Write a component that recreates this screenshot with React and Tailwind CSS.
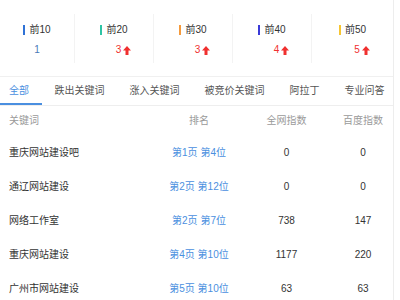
import React, { useState } from "react";

const stats = [
  { label: "前10", value: 1, bar: "bg-[#2f72d6]", up: false },
  { label: "前20", value: 3, bar: "bg-[#2ec4a5]", up: true },
  { label: "前30", value: 3, bar: "bg-[#f59a3c]", up: true },
  { label: "前40", value: 4, bar: "bg-[#3a3ad8]", up: true },
  { label: "前50", value: 5, bar: "bg-[#f7c531]", up: true },
];

const tabs = ["全部", "跌出关键词", "涨入关键词", "被竞价关键词", "阿拉丁", "专业问答"];

const rows = [
  { keyword: "重庆网站建设吧", page: 1, pos: 4, all: 0, baidu: 0 },
  { keyword: "通辽网站建设", page: 2, pos: 12, all: 0, baidu: 0 },
  { keyword: "网络工作室", page: 2, pos: 7, all: 738, baidu: 147 },
  { keyword: "重庆网站建设", page: 4, pos: 10, all: 1177, baidu: 220 },
  { keyword: "广州市网站建设", page: 5, pos: 10, all: 63, baidu: 63 },
];

const UpArrow = () => (
  <svg width="8" height="9" viewBox="0 0 8 9" className="ml-[2px]">
    <path d="M4 0 L8 4.5 L5.5 4.5 L5.5 9 L2.5 9 L2.5 4.5 L0 4.5 Z" fill="#f0302f" />
  </svg>
);

const App = () => {
  const [activeTab, setActiveTab] = useState(0);

  return (
    <div className="w-[400px] h-[300px] overflow-hidden bg-white font-['Liberation_Sans','Noto_Sans_CJK_SC',sans-serif] text-[10px]">
      <div className="w-[394px] h-full border-r border-[#ededed]">
        <div className="h-[77px] border-b border-[#f0f0f0] pt-[14px]">
          <div className="grid grid-cols-[75px_79px_79px_79px_81px] h-[49px]">
            {stats.map((s, i) => (
              <div
                key={s.label}
                className={`flex flex-col items-center pt-[9px] ${
                  i < 4 ? "border-r border-[#f3f3f3]" : ""
                }`}
              >
                <div className="flex items-center leading-[14px] text-[#333]">
                  <span className={`w-[2px] h-[10px] mr-[4px] ${s.bar}`} />
                  {s.label}
                </div>
                {s.up ? (
                  <div className="flex items-center mt-[6px] leading-[14px] pl-[19px] text-[#f0302f]">
                    {s.value}
                    <UpArrow />
                  </div>
                ) : (
                  <div className="mt-[6px] leading-[14px] text-[#4a78b8]">{s.value}</div>
                )}
              </div>
            ))}
          </div>
        </div>

        <div className="flex h-[29px] border-b border-[#eeeeee]">
          {tabs.map((t, i) => (
            <button
              key={t}
              onClick={() => setActiveTab(i)}
              className={`flex shrink-0 items-center whitespace-nowrap border-b-2 ${
                i === 0 ? "pl-[9px] pr-[13px]" : "px-[12.5px]"
              } ${
                activeTab === i
                  ? "border-[#4a8fe0] text-[#4a8fe0]"
                  : "border-transparent text-[#555]"
              }`}
            >
              {t}
            </button>
          ))}
        </div>

        <div className="grid grid-cols-[158px_82px_93px_60px] h-[29px] items-center text-[#9a9a9a]">
          <div className="pl-[9px]">关键词</div>
          <div className="text-center">排名</div>
          <div className="text-center">全网指数</div>
          <div className="text-center">百度指数</div>
        </div>

        {rows.map((r) => (
          <div
            key={r.keyword}
            className="grid grid-cols-[158px_82px_93px_60px] h-[34px] items-center text-[#333]"
          >
            <div className="pl-[9px]">{r.keyword}</div>
            <div className="text-center text-[#4a8fe0]">
              第{r.page}页 第{r.pos}位
            </div>
            <div className="text-center">{r.all}</div>
            <div className="text-center">{r.baidu}</div>
          </div>
        ))}
      </div>
    </div>
  );
};

export default App;
